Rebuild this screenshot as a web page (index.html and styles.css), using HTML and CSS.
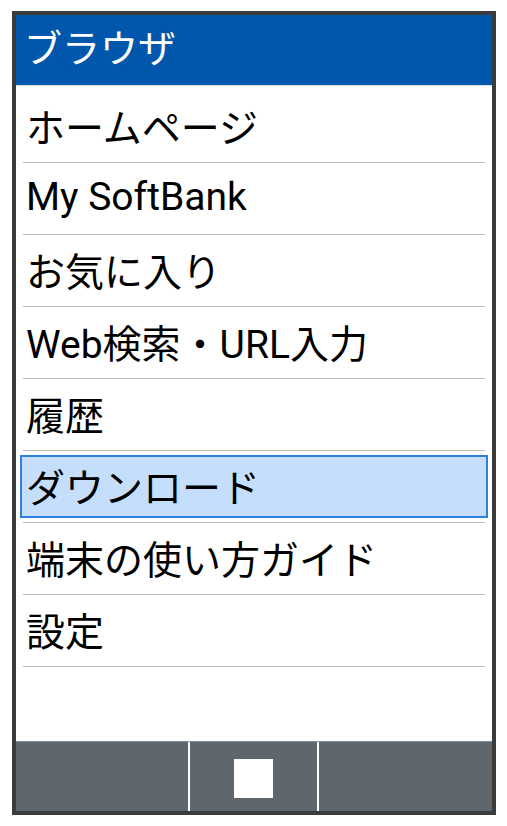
FILE: index.html
```html
<!DOCTYPE html>
<html lang="ja">
<head>
<meta charset="utf-8">
<link rel="stylesheet" href="styles.css">
</head>
<body>
<div class="frame">
  <header class="title">ブラウザ</header>
  <ul class="menu">
    <li class="row"><span class="label">ホームページ</span></li>
    <li class="row"><span class="label">My SoftBank</span></li>
    <li class="row"><span class="label">お気に入り</span></li>
    <li class="row"><span class="label">Web検索・URL入力</span></li>
    <li class="row"><span class="label">履歴</span></li>
    <li class="row"><span class="label selected">ダウンロード</span></li>
    <li class="row"><span class="label">端末の使い方ガイド</span></li>
    <li class="row"><span class="label">設定</span></li>
  </ul>
  <footer class="softkeys">
    <div class="key key-left"></div>
    <div class="key key-center"><span class="square"></span></div>
    <div class="key key-right"></div>
  </footer>
</div>
</body>
</html>
```

FILE: styles.css
```css
html, body {
  margin: 0;
  padding: 0;
  background: #ffffff;
}
body {
  font-family: Roboto, "Noto Sans CJK JP", sans-serif;
  padding: 11px 11px 11px 12px;
}
.frame {
  width: 476px;
  height: 796px;
  border: 4px solid #3b3b3b;
  display: flex;
  flex-direction: column;
  background: #ffffff;
}
.title {
  height: 70px;
  flex: 0 0 70px;
  background: #0057ab;
  color: #ffffff;
  font-size: 38px;
  line-height: 68px;
  padding-left: 8px;
  box-shadow: 0 1px 1px rgba(0,0,0,0.12);
}
.menu {
  list-style: none;
  margin: 0;
  padding: 6px 7px 0;
  flex: 1 1 auto;
}
.row {
  border-bottom: 1px solid #bcbcbc;
  padding: 4px 0;
  box-sizing: border-box;
  height: 72px;
}
.label {
  display: flex;
  align-items: center;
  height: 63px;
  box-sizing: border-box;
  margin: 0 -3px;
  padding: 0 0 4px 4px;
  border: 2px solid transparent;
  font-size: 39px;
  color: #000000;
  white-space: nowrap;
}
.label.selected {
  background: #c4defc;
  border-color: #2f7fde;
}
.softkeys {
  flex: 0 0 70px;
  height: 70px;
  display: flex;
  background: #ffffff;
  gap: 2px;
  border-top: 1px solid #868d92;
  box-sizing: border-box;
}
.key {
  background: #5f676d;
}
.key-left { width: 172px; }
.key-center {
  width: 127px;
  display: flex;
  justify-content: center;
  align-items: center;
  padding-top: 4px;
  box-sizing: border-box;
}
.key-right { flex: 1 1 auto; }
.square {
  width: 39px;
  height: 39px;
  background: #ffffff;
}
```
